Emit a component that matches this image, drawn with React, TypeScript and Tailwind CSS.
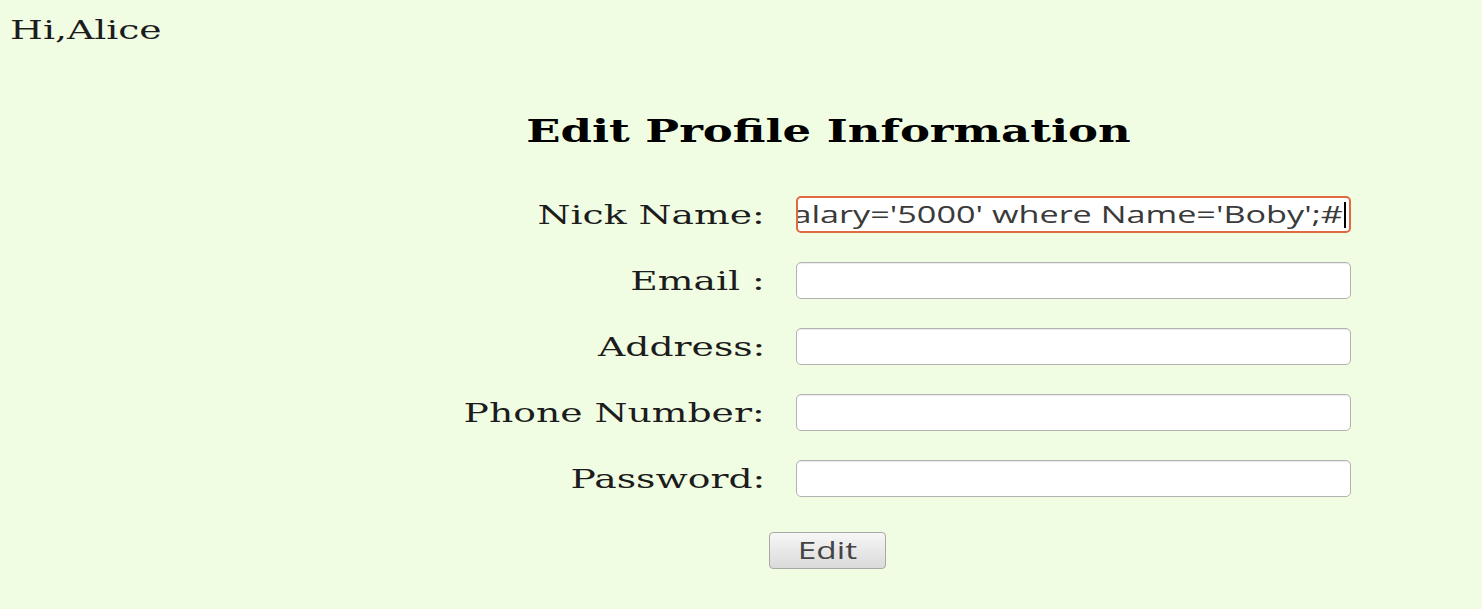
import React from 'react';

const fields = ['Nick Name:', 'Email :', 'Address:', 'Phone Number:', 'Password:'];

// the reference capture is stretched sideways, so text spans get a horizontal scale
const wide = 'inline-block scale-x-[1.45]';

export default function App() {
  return (
    <div className="min-h-screen w-full bg-[#f1fde3] text-[#1c1c1c] font-['DejaVu_Serif',serif]">
      <div className="pl-[10px] pt-[11px] text-[26px] leading-[38px]">
        <span className={`${wide} origin-left`}>Hi,Alice</span>
      </div>

      <div className="ml-[476px] w-[704px] mt-[60px] text-center text-[31px] font-bold leading-[44px] text-black">
        <span className={`${wide} origin-center`}>Edit Profile Information</span>
      </div>

      <div className="mt-[43px] ml-[440px] grid grid-cols-[325px_555px] gap-x-[31px] gap-y-[29px]">
        {fields.map((label, i) => (
          <React.Fragment key={label}>
            <div className="h-[37px] flex items-center justify-end text-[26px] leading-none">
              <span className={`${wide} origin-right`}>{label}</span>
            </div>
            {i === 0 ? (
              <div className="h-[37px] rounded-[5px] border-2 border-[#e0693f] bg-white flex items-center justify-end overflow-hidden pr-[3px] whitespace-nowrap font-['Open_Sans',sans-serif] text-[23.6px] text-[#3a3a3a]">
                <span className={`${wide} origin-right`}>salary='5000' where Name='Boby';#</span>
                <span className="ml-[1px] h-[26px] w-[2px] bg-black shrink-0" />
              </div>
            ) : (
              <div className="h-[37px] rounded-[5px] border-[1.5px] border-[#b2b2b2] bg-white shadow-[inset_0_1px_1px_rgba(0,0,0,0.08)]" />
            )}
          </React.Fragment>
        ))}
      </div>

      <div className="ml-[769px] mt-[35px]">
        <button className="h-[37px] w-[117px] rounded-[4px] border-[1.5px] border-[#a8a8a8] bg-gradient-to-b from-[#f7f7f7] to-[#dadada] font-['Open_Sans',sans-serif] text-[23px] leading-none text-[#444]">
          <span className={`${wide} origin-center`}>Edit</span>
        </button>
      </div>
    </div>
  );
}
